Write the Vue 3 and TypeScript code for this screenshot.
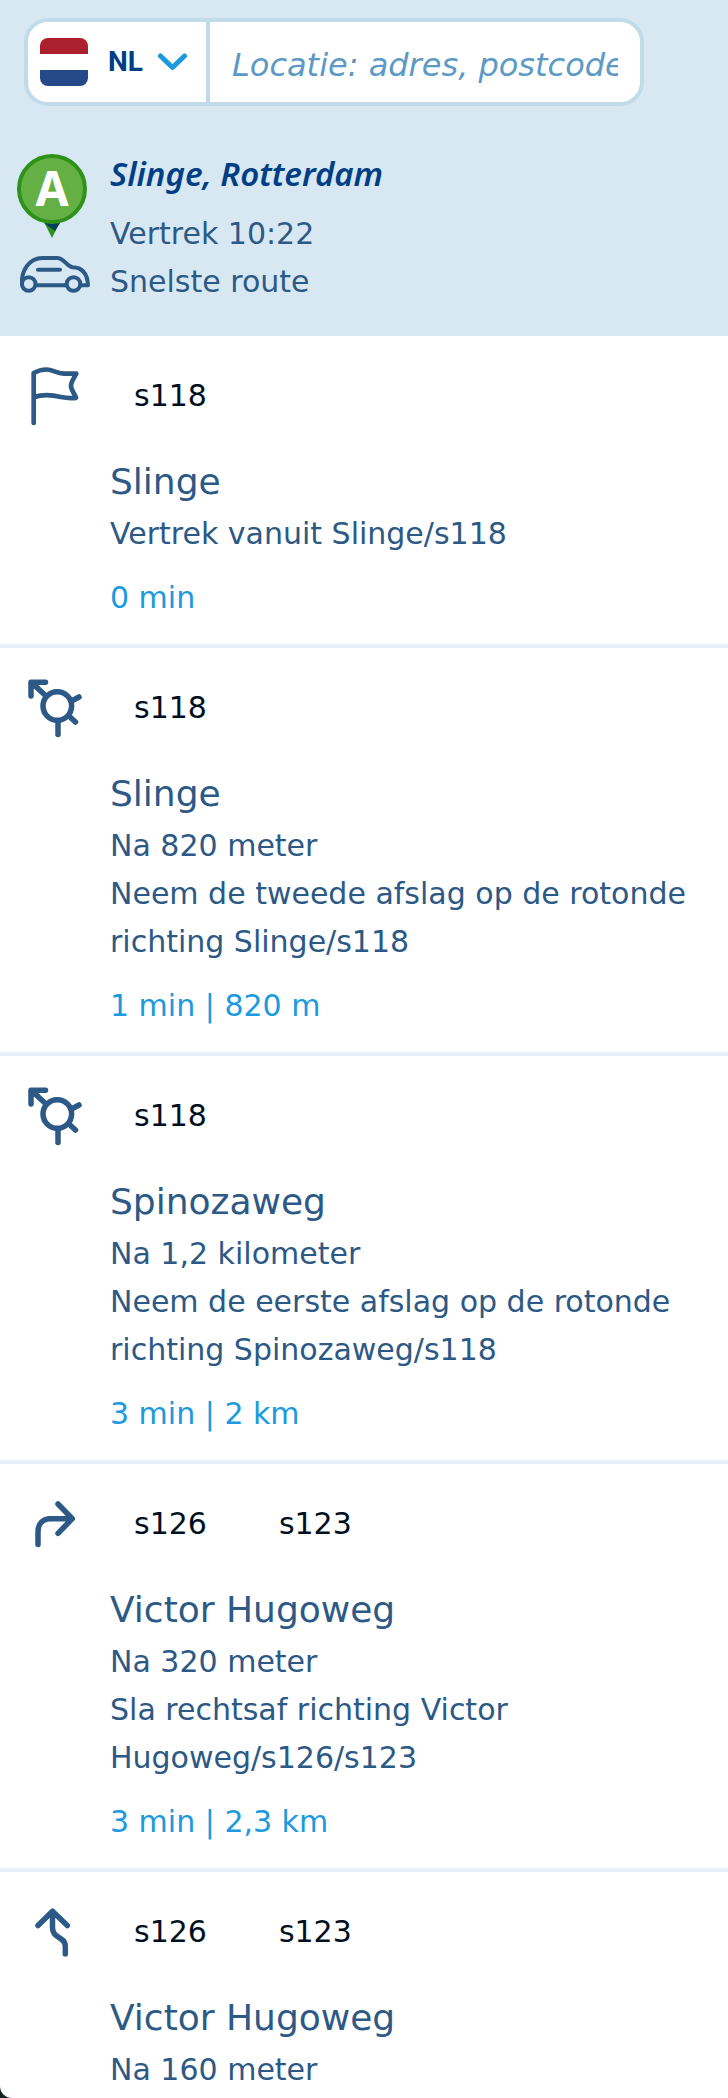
<script setup lang="ts">
import { ref } from 'vue'

type IconName = 'flag' | 'roundabout' | 'right' | 'keep-left'

interface Step {
  icon: IconName
  roads: string[]
  street: string
  distance?: string
  instruction?: string
  total?: string
}

const location = ref('')

const steps: Step[] = [
  { icon: 'flag', roads: ['s118'], street: 'Slinge', instruction: 'Vertrek vanuit Slinge/s118', total: '0 min' },
  {
    icon: 'roundabout',
    roads: ['s118'],
    street: 'Slinge',
    distance: 'Na 820 meter',
    instruction: 'Neem de tweede afslag op de rotonde richting Slinge/s118',
    total: '1 min | 820 m',
  },
  {
    icon: 'roundabout',
    roads: ['s118'],
    street: 'Spinozaweg',
    distance: 'Na 1,2 kilometer',
    instruction: 'Neem de eerste afslag op de rotonde richting Spinozaweg/s118',
    total: '3 min | 2 km',
  },
  {
    icon: 'right',
    roads: ['s126', 's123'],
    street: 'Victor Hugoweg',
    distance: 'Na 320 meter',
    instruction: 'Sla rechtsaf richting Victor Hugoweg/s126/s123',
    total: '3 min | 2,3 km',
  },
  { icon: 'keep-left', roads: ['s126', 's123'], street: 'Victor Hugoweg', distance: 'Na 160 meter' },
]
</script>

<template>
  <main class="planner">
    <header class="top">
      <form class="search" role="search" @submit.prevent>
        <button class="country" type="button" aria-label="Land: NL">
          <span class="flag" aria-hidden="true"></span>
          <span>NL</span>
          <svg class="chevron" viewBox="0 0 30 20" aria-hidden="true">
            <path d="M2.500 4 14.500 15.500 26.500 4" />
          </svg>
        </button>
        <input
          v-model="location"
          class="location"
          type="text"
          aria-label="Locatie"
          placeholder="Locatie: adres, postcode"
        />
      </form>

      <section class="start">
        <div class="start-icons">
          <svg class="pin" viewBox="0 0 76 86" aria-hidden="true">
            <path d="M28 68H44L36 84Z" fill="#2f9218" />
            <path d="M28 69H44L39 77Z" fill="#003f5c" />
            <circle cx="36" cy="35" r="33" fill="#65b045" stroke="#2f9218" stroke-width="4" />
            <text x="36" y="52" text-anchor="middle">A</text>
          </svg>
          <svg class="car" viewBox="0 0 76 40" aria-hidden="true">
            <circle cx="12.7" cy="30" r="6.8" />
            <circle cx="57.5" cy="30" r="6.8" />
            <path d="M20 31.3H50" />
            <path d="M6 29C5.300 17 13 4 26.500 4H41C48 4 50.500 12 56.500 13.300C67 13.500 71.500 21 72 31.300H65" />
            <path d="M22 15.700H44" />
          </svg>
        </div>
        <div>
          <h1>Slinge, Rotterdam</h1>
          <p>Vertrek 10:22</p>
          <p>Snelste route</p>
        </div>
      </section>
    </header>

    <ol class="steps">
      <li v-for="(step, i) in steps" :key="i" class="step">
        <svg class="icon" viewBox="0 0 60 60" aria-hidden="true">
          <g v-if="step.icon === 'flag'" stroke-width="4.700">
            <path
              d="M9.700 57V7C14 4.500 18 3.500 22.500 3.500C29 3.500 32 7.300 40 7.600H52.300C50 12 47 16 47 20C47 24 50.500 27.500 52 31.800C47 32.300 41 31.800 37 31C28 28.800 20 27.500 10.500 31"
            />
          </g>
          <g v-else-if="step.icon === 'roundabout'" stroke-width="5.500">
            <circle cx="33.300" cy="28" r="14.300" />
            <path d="M34 43.500V56.500M48.500 22.500 55 19M46 39 51.500 44M22 18 7.500 4.500M21.500 4.300H7V18" />
            <path d="M7 4.300H16L7 13Z" fill="#2c5985" stroke="none" />
          </g>
          <g v-else-if="step.icon === 'right'" stroke-width="5.500">
            <path d="M14 50.500V38C14 29.500 19 24.700 26.500 24.700H48M34 10 48.300 24.700 34 39.300" />
          </g>
          <g v-else stroke-width="5.500">
            <path d="M14 23.500 28.500 9.300 43.300 23.500M28.500 9.300V26C28.500 37 41.300 34 41.300 44V52" />
          </g>
        </svg>
        <div class="body">
          <ul class="roads">
            <li v-for="road in step.roads" :key="road">{{ road }}</li>
          </ul>
          <h2>{{ step.street }}</h2>
          <p v-if="step.distance">{{ step.distance }}</p>
          <p v-if="step.instruction">{{ step.instruction }}</p>
          <p v-if="step.total" class="total">{{ step.total }}</p>
        </div>
      </li>
    </ol>
  </main>
</template>

<style>
body {
  margin: 0;
  background: #14211f;
}
</style>

<style scoped>
.planner {
  box-sizing: border-box;
  height: 100vh;
  overflow: hidden;
  border-bottom-left-radius: 12px;
  background: #fff;
  color: #2c5985;
  font-family: Verdana, "DejaVu Sans", sans-serif;
  font-size: 30px;
  line-height: 48px;
}

h1,
h2,
p,
ol,
ul {
  margin: 0;
  padding: 0;
  font-weight: 400;
  list-style: none;
}

.top {
  padding: 18px 0 30px;
  background: #d8e8f3;
}

.search {
  display: flex;
  height: 80px;
  margin: 0 84px 0 24px;
  border: 4px solid #c1dbea;
  border-radius: 24px;
  background: #fff;
  overflow: hidden;
}

.country {
  display: flex;
  flex: none;
  align-items: center;
  box-sizing: border-box;
  width: 182px;
  padding: 0 18px 0 12px;
  border: 0;
  border-right: 4px solid #c1dbea;
  background: none;
  color: #003f85;
  font: 700 28px/48px Roboto, sans-serif;
}

.flag {
  width: 48px;
  height: 48px;
  margin-right: 20px;
  border-radius: 8px;
  background: linear-gradient(#ab202c 0 16px, #fff 16px 32px, #244888 32px);
}

.chevron {
  width: 30px;
  height: 20px;
  margin-left: auto;
  fill: none;
  stroke: #1a9bdc;
  stroke-width: 5;
  stroke-linecap: round;
  stroke-linejoin: round;
}

.location {
  flex: 1;
  min-width: 0;
  padding: 6px 22px 0;
  border: 0;
  outline: 0;
  background: none;
  color: #003f85;
  font-family: inherit;
  font-size: 32px;
  font-style: italic;
}

.location::placeholder {
  color: #5c9ac5;
  opacity: 1;
}

.start {
  display: grid;
  grid-template-columns: 110px 1fr;
  margin-top: 40px;
}

.start-icons {
  display: flex;
  flex-direction: column;
  gap: 14px;
  padding: 8px 0 0 16px;
}

.pin {
  width: 76px;
  height: 86px;
}

.pin text {
  fill: #fff;
  font: 700 48px "Noto Sans", sans-serif;
}

.car {
  width: 76px;
  height: 40px;
  fill: none;
  stroke: #2c5985;
  stroke-width: 4;
  stroke-linecap: round;
  stroke-linejoin: round;
}

.start h1 {
  margin-bottom: 8px;
  color: #003f85;
  font: italic 600 33px/56px "Noto Sans", sans-serif;
}

.step {
  display: grid;
  grid-template-columns: 110px 1fr;
  border-bottom: 4px solid #e8f1f9;
}

.icon {
  width: 60px;
  height: 60px;
  margin: 30px 0 0 24px;
  fill: none;
  stroke: #2c5985;
  stroke-linecap: round;
  stroke-linejoin: round;
}

.body {
  padding: 36px 24px 22px 0;
}

.roads {
  display: flex;
  gap: 24px;
  margin-bottom: 34px;
  color: #000f1e;
}

.roads li {
  padding: 0 24px;
}

.step h2 {
  font-size: 36px;
  line-height: 56px;
}

.total {
  margin-top: 16px;
  color: #1b9ade;
}
</style>
